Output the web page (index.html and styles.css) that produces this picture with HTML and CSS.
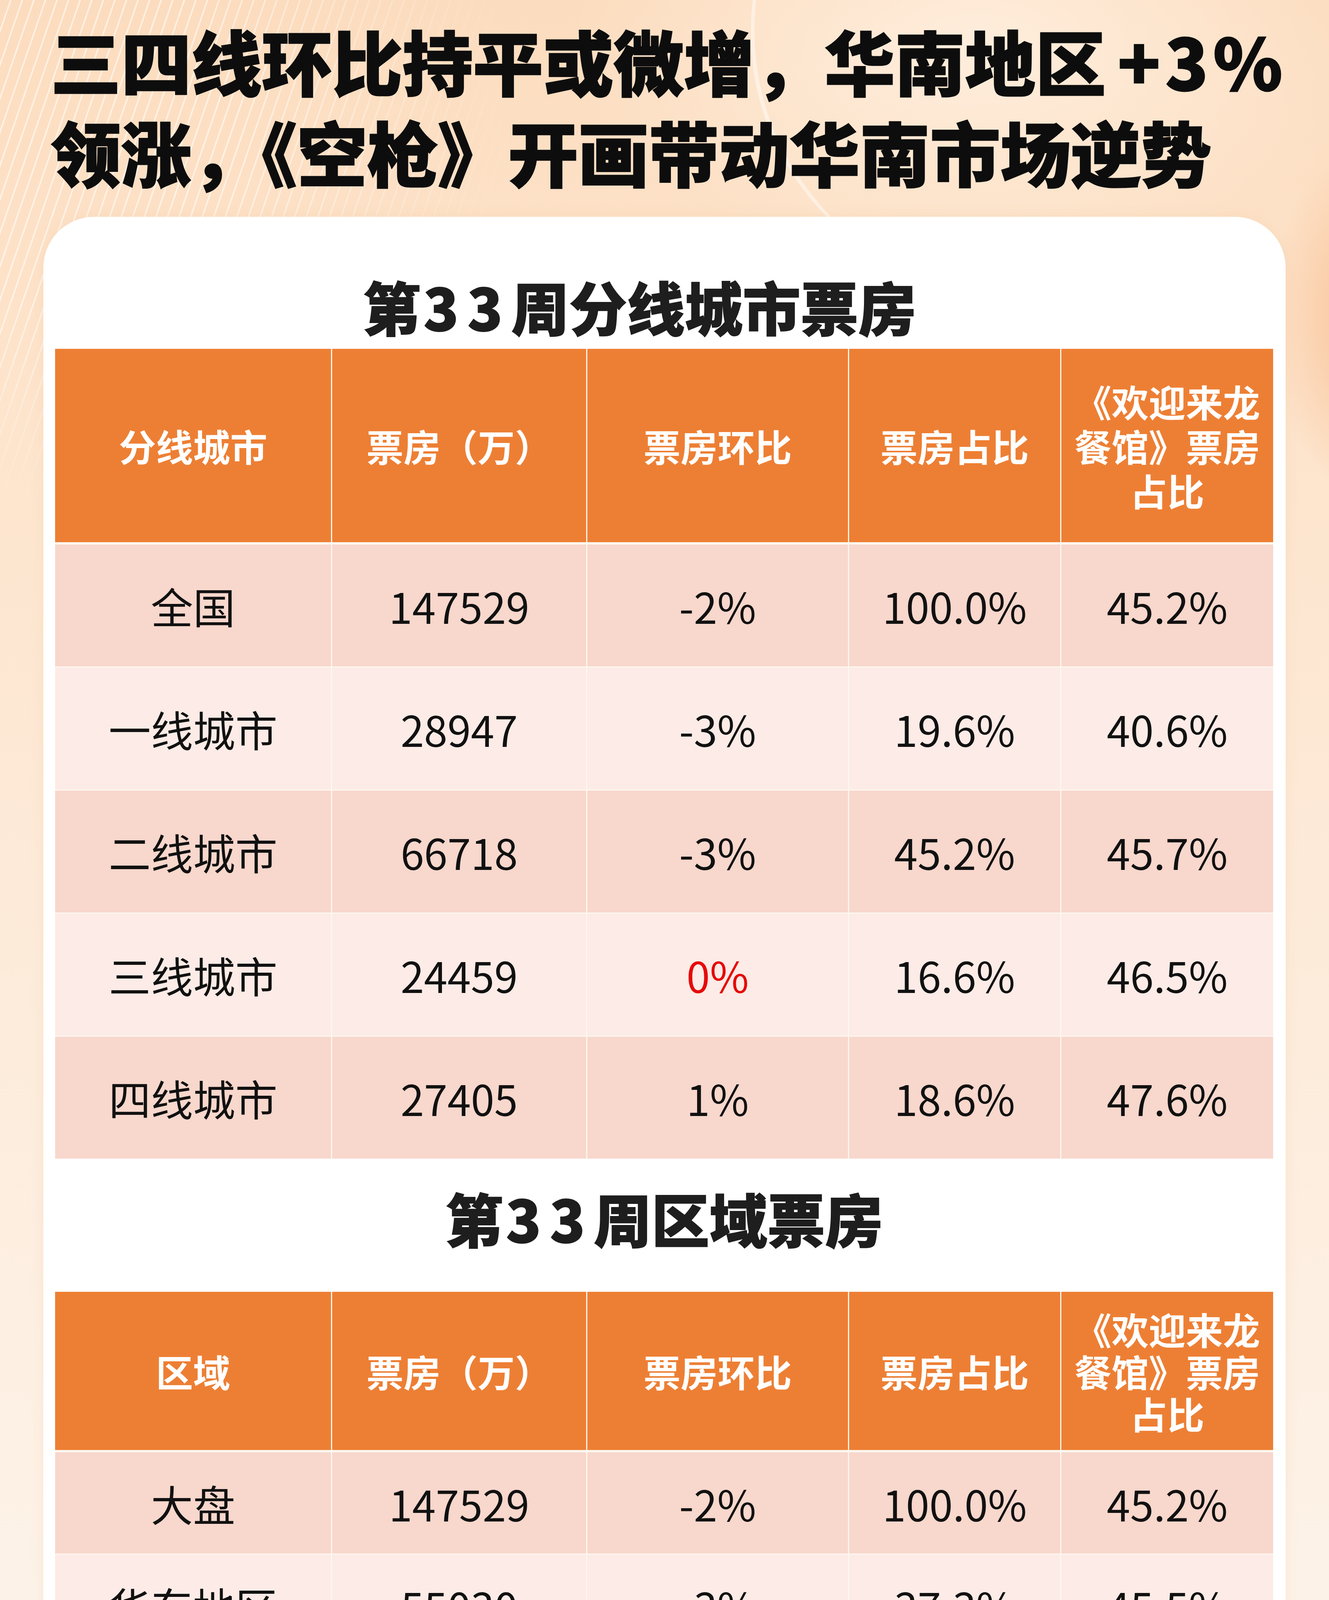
FILE: index.html
```html
<!DOCTYPE html>
<html lang="zh-CN">
<head>
<meta charset="utf-8">
<title>第33周票房</title>
<link rel="stylesheet" href="styles.css">
</head>
<body>
<div class="page">
  <div class="bg-lines"></div>
  <div class="bg-swoosh"></div>
  <header class="headline">
    <h1><span class="line">三四线环比持平或微增，华南地区<span class="plus">+3%</span></span><span class="line">领涨，《空枪》开画带动华南市场逆势</span></h1>
  </header>

  <main class="card">
    <h2 class="sec-title first">第<span class="num">33</span>周分线城市票房</h2>
    <table class="data t1">
      <colgroup><col class="c1"><col class="c2"><col class="c3"><col class="c4"><col class="c5"></colgroup>
      <thead>
        <tr><th>分线城市</th><th>票房（万）</th><th>票房环比</th><th>票房占比</th><th>《欢迎来龙餐馆》票房占比</th></tr>
      </thead>
      <tbody>
        <tr class="dark"><td>全国</td><td>147529</td><td>-2%</td><td>100.0%</td><td>45.2%</td></tr>
        <tr class="light"><td>一线城市</td><td>28947</td><td>-3%</td><td>19.6%</td><td>40.6%</td></tr>
        <tr class="dark"><td>二线城市</td><td>66718</td><td>-3%</td><td>45.2%</td><td>45.7%</td></tr>
        <tr class="light"><td>三线城市</td><td>24459</td><td class="red">0%</td><td>16.6%</td><td>46.5%</td></tr>
        <tr class="dark last"><td>四线城市</td><td>27405</td><td>1%</td><td>18.6%</td><td>47.6%</td></tr>
      </tbody>
    </table>

    <h2 class="sec-title second">第<span class="num">33</span>周区域票房</h2>
    <table class="data t2">
      <colgroup><col class="c1"><col class="c2"><col class="c3"><col class="c4"><col class="c5"></colgroup>
      <thead>
        <tr><th>区域</th><th>票房（万）</th><th>票房环比</th><th>票房占比</th><th>《欢迎来龙餐馆》票房占比</th></tr>
      </thead>
      <tbody>
        <tr class="dark"><td>大盘</td><td>147529</td><td>-2%</td><td>100.0%</td><td>45.2%</td></tr>
        <tr class="light"><td>华东地区</td><td>55030</td><td>-3%</td><td>37.3%</td><td>45.5%</td></tr>
        <tr class="dark"><td>华南地区</td><td>24488</td><td class="red">3%</td><td>16.6%</td><td>39.9%</td></tr>
        <tr class="light"><td>华北地区</td><td>19122</td><td>-4%</td><td>13.0%</td><td>47.4%</td></tr>
        <tr class="dark"><td>华中地区</td><td>16968</td><td>0%</td><td>11.5%</td><td>46.4%</td></tr>
        <tr class="light"><td>西南地区</td><td>16269</td><td>-1%</td><td>11.0%</td><td>44.0%</td></tr>
        <tr class="dark"><td>东北地区</td><td>8075</td><td>-4%</td><td>5.5%</td><td>50.5%</td></tr>
        <tr class="light last"><td>西北地区</td><td>7576</td><td>-4%</td><td>5.1%</td><td>48.9%</td></tr>
      </tbody>
    </table>
  </main>

  <footer class="foot">
    <div class="stamp">
      <div>统计截至时间</div>
      <div>2026年8月24日</div>
    </div>
    <div class="brand">
      <svg class="brand-icon" viewBox="0 0 180 180" width="180" height="180" aria-hidden="true">
        <defs>
          <clipPath id="tower"><polygon points="60,80 120,80 128,180 51,180"/></clipPath>
        </defs>
        <rect x="0" y="0" width="180" height="180" rx="42" fill="#f36a20"/>
        <path d="M64 70 V46 L89 26 L115 46 V70 Z" fill="#fff7f0"/>
        <circle cx="89.5" cy="53" r="6" fill="#f36a20"/>
        <rect x="48" y="68" width="84" height="13" fill="#fff7f0"/>
        <g clip-path="url(#tower)">
          <rect x="40" y="80" width="100" height="100" fill="#fff7f0"/>
          <polygon points="40,142 130,112 136,130 40,164" fill="#f7a47c"/>
          <g fill="#f36a20">
            <rect x="64" y="124" width="6" height="8" transform="rotate(-22 67 128)"/>
            <rect x="77" y="119" width="6" height="8" transform="rotate(-22 80 123)"/>
            <rect x="90" y="114" width="6" height="8" transform="rotate(-22 93 118)"/>
            <rect x="103" y="108" width="6" height="8" transform="rotate(-22 106 112)"/>
            <rect x="60" y="166" width="6" height="8" transform="rotate(-22 63 170)"/>
            <rect x="73" y="161" width="6" height="8" transform="rotate(-22 76 165)"/>
            <rect x="86" y="156" width="6" height="8" transform="rotate(-22 89 160)"/>
            <rect x="99" y="150" width="6" height="8" transform="rotate(-22 102 154)"/>
          </g>
        </g>
      </svg>
      <span class="brand-name">灯塔专业版</span>
    </div>
  </footer>
</div>
</body>
</html>
```

FILE: styles.css
```css
* { box-sizing: border-box; }

html, body {
  margin: 0;
  padding: 0;
}

body {
  font-family: "Noto Sans CJK SC", "Noto Sans", "Liberation Sans", sans-serif;
  color: #111;
  background: #fcf6ee;
}

.page {
  position: relative;
  width: 3401px;
  min-height: 6429px;
  overflow: hidden;
  background:
    radial-gradient(ellipse 380px 640px at 3520px 820px, rgba(244, 160, 100, 0.55), rgba(244, 160, 100, 0) 72%),
    radial-gradient(ellipse 1500px 800px at 2500px 120px, rgba(255, 243, 230, 0.75), rgba(255, 243, 230, 0) 70%),
    linear-gradient(180deg, #fcdcbe 0px, #fde2c8 700px, #fdead8 2200px, #fdf3e9 4200px, #fcf6ee 6429px);
}

/* decorative thin lines in the upper-left background */
.bg-lines {
  position: absolute;
  left: 0;
  top: 0;
  width: 1900px;
  height: 1700px;
  background: repeating-linear-gradient(109deg,
    rgba(255, 255, 255, 0) 0px,
    rgba(255, 255, 255, 0) 24px,
    rgba(255, 255, 255, 0.55) 24px,
    rgba(255, 255, 255, 0.55) 28px);
  -webkit-mask-image: radial-gradient(ellipse 1700px 1300px at 0px 300px, #000 35%, transparent 80%);
  mask-image: radial-gradient(ellipse 1700px 1300px at 0px 300px, #000 35%, transparent 80%);
  pointer-events: none;
}

.bg-swoosh {
  position: absolute;
  left: 1900px;
  top: -900px;
  width: 2200px;
  height: 1700px;
  border-radius: 50%;
  border-left: 10px solid rgba(255, 255, 255, 0.45);
  transform: rotate(-18deg);
  pointer-events: none;
}

.headline {
  position: relative;
  padding: 36px 0 0 130px;
}

.headline h1 {
  margin: 0;
  font-size: 180px;
  font-weight: 900;
  color: #0d0d0d;
  -webkit-text-stroke: 3px #0d0d0d;
  white-space: nowrap;
}

.headline .line {
  display: block;
  height: 233px;
  line-height: 233px;
}

.headline .plus {
  padding-left: 30px;
  letter-spacing: 0.07em;
}

.card {
  position: relative;
  margin: 53px 111px 0;
  padding: 138px 32px 228px 30px;
  background: #ffffff;
  border-radius: 130px;
  box-shadow: 0 0 30px rgba(240, 200, 160, 0.25);
}

.sec-title {
  margin: 0 0 20px;
  text-align: center;
  font-size: 148px;
  line-height: 180px;
  font-weight: 900;
  color: #1e1e1e;
  -webkit-text-stroke: 2px #1e1e1e;
}

.sec-title.first {
  padding-right: 126px;
}

.sec-title .num {
  letter-spacing: 0.15em;
  padding-left: 0.05em;
}

.sec-title.second {
  margin: 61px 0 100px;
}

.data {
  width: 3117px;
  border-collapse: separate;
  border-spacing: 0;
  table-layout: fixed;
}

.data col.c1 { width: 709px; }
.data col.c2 { width: 653px; }
.data col.c3 { width: 670px; }
.data col.c4 { width: 543px; }
.data col.c5 { width: 542px; }

.data th,
.data td {
  padding: 0 22px;
  text-align: center;
  vertical-align: middle;
  border-right: 3px solid #fdf7f0;
}

.data th:last-child,
.data td:last-child {
  border-right: none;
}

.data th {
  background: #ed7f34;
  color: #ffffff;
  font-size: 95px;
  line-height: 114px;
  font-weight: 700;
  border-bottom: 6px solid #fdf7f0;
}

.t1 th { height: 501px; }
.t2 th { height: 411px; line-height: 108px; }

.data td {
  font-size: 108px;
  font-weight: 400;
  color: #111;
  line-height: 1;
  border-bottom: 3px solid #fdf7f0;
  white-space: nowrap;
}

.data tr.last td { border-bottom: none; }

.t1 td { height: 315px; }
.t1 tr.last td { height: 312px; }
.t2 td { height: 262px; }
.t2 tr.last td { height: 259px; }

.data tr.dark td { background: #f8d7cc; }
.data tr.light td { background: #fcebe6; }

.data td.red { color: #e60a0a; }

.foot {
  display: grid;
  grid-template-columns: 1fr auto 1fr;
  align-items: center;
  padding: 10px 130px 0;
}

.stamp {
  font-size: 104px;
  line-height: 181px;
  color: #57524d;
}

.brand {
  display: flex;
  align-items: center;
  gap: 54px;
}

.brand-icon {
  display: block;
  flex: 0 0 auto;
}

.brand-name {
  font-size: 115px;
  line-height: 1;
  color: #f26b22;
  font-weight: 400;
  letter-spacing: 0;
}
```
